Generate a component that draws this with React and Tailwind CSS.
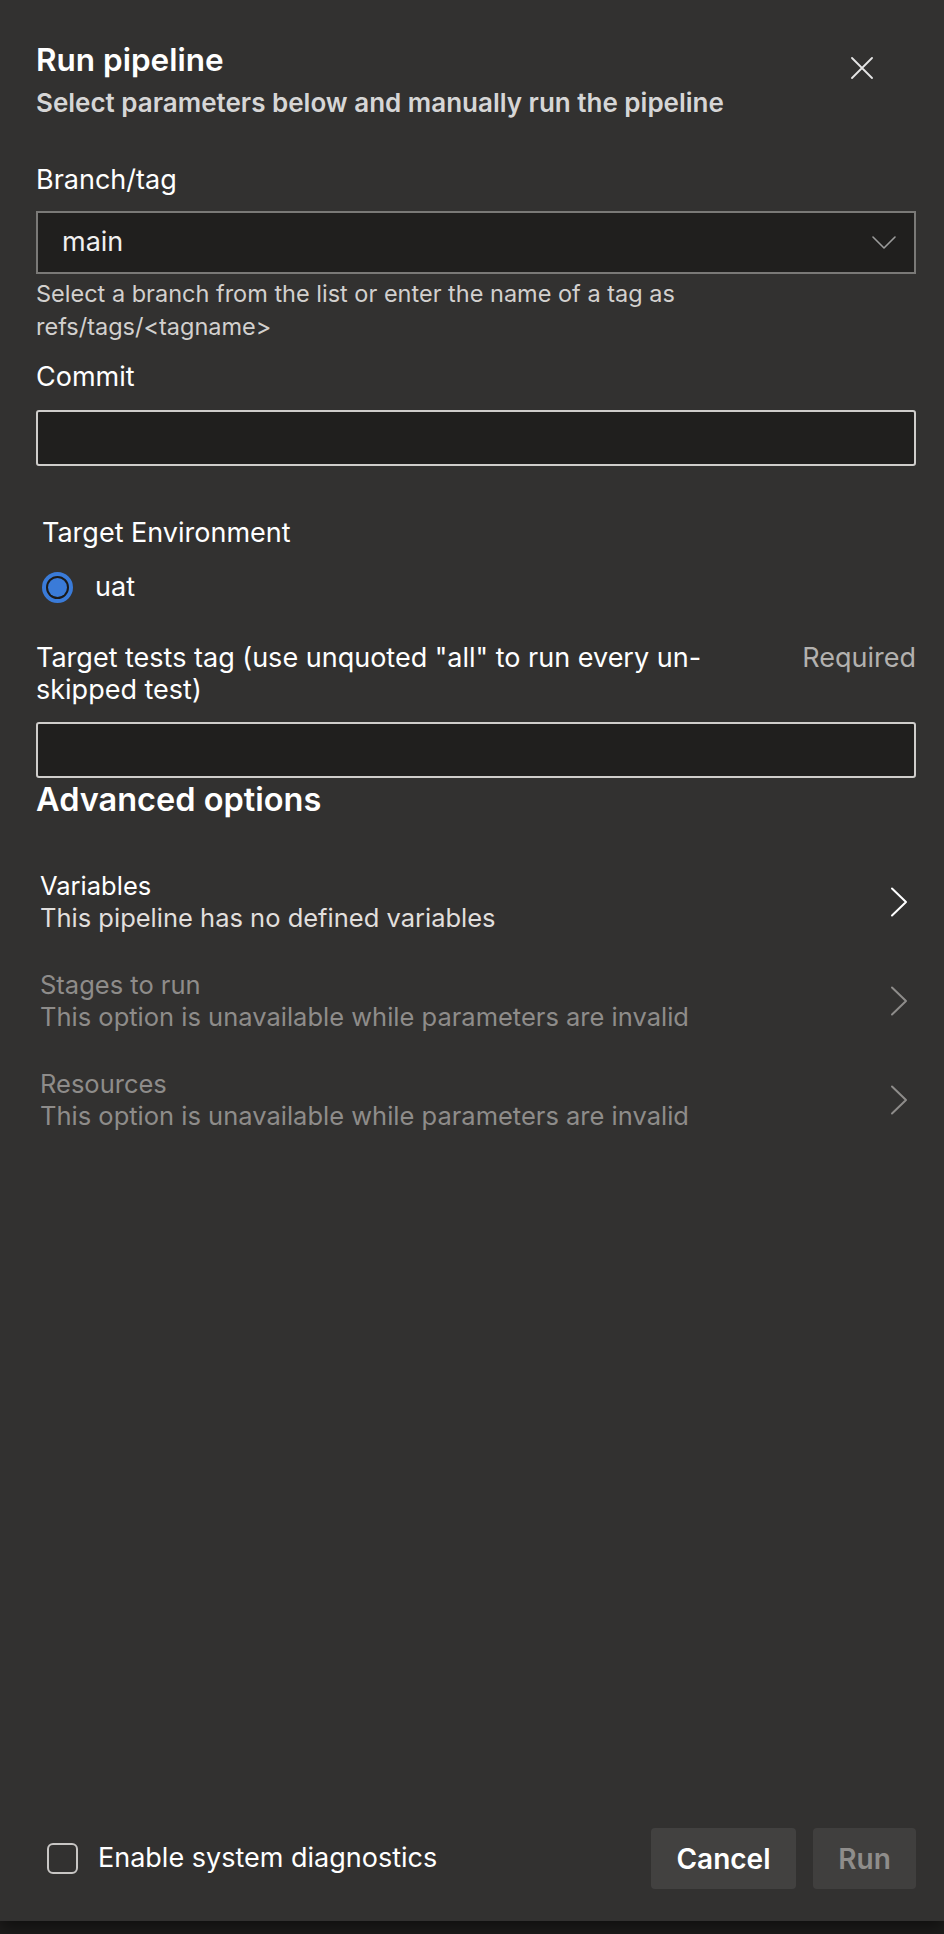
import React, { useState } from "react";

const font = { fontFamily: "Inter, 'Noto Sans', 'Liberation Sans', sans-serif" };

const CloseIcon = () => (
  <svg width="22" height="22" viewBox="0 0 22 22" fill="none">
    <path d="M1 1L21 21M21 1L1 21" stroke="#e6e6e6" strokeWidth="1.8" strokeLinecap="round" />
  </svg>
);

const ChevronDown = () => (
  <svg width="24" height="13" viewBox="0 0 24 13" fill="none">
    <path d="M1 1L12 12L23 1" stroke="#9b9b9b" strokeWidth="1.6" strokeLinecap="round" strokeLinejoin="round" />
  </svg>
);

const ChevronRight = ({ color }) => (
  <svg width="18" height="30" viewBox="0 0 18 30" fill="none">
    <path d="M2 1.5L16 15L2 28.5" stroke={color} strokeWidth="2" strokeLinecap="round" strokeLinejoin="round" />
  </svg>
);

const advancedRows = [
  { title: "Variables", desc: "This pipeline has no defined variables", disabled: false },
  { title: "Stages to run", desc: "This option is unavailable while parameters are invalid", disabled: true },
  { title: "Resources", desc: "This option is unavailable while parameters are invalid", disabled: true },
];

const App = () => {
  const [diagnostics, setDiagnostics] = useState(false);

  return (
    <div className="h-[1934px] overflow-hidden bg-[#1e1d1c]" style={font}>
      <div className="h-[1921px] flex flex-col bg-[#323130] shadow-[0_6px_16px_rgba(0,0,0,0.5)]">
        {/* Header */}
        <div className="flex justify-between pl-[36px] pr-[71px] pt-[41px]">
          <div>
            <h1 className="text-[31.5px] leading-[37px] font-semibold text-white">Run pipeline</h1>
            <p className="mt-[9px] text-[26px] leading-[32px] font-semibold text-[#d6d6d6]">
              Select parameters below and manually run the pipeline
            </p>
          </div>
          <button className="mt-[16px] h-[22px]">
            <CloseIcon />
          </button>
        </div>

        {/* Form */}
        <div className="pl-[36px] pr-[28px]">
          <label className="block mt-[45px] text-[27px] leading-[32px] text-white">Branch/tag</label>
          <div className="mt-[15px] h-[63px] flex items-center justify-between border-2 border-[#7a7977] bg-[#201f1e] pl-[24px] pr-[18px]">
            <span className="text-[27px] text-[#f0f0f0]">main</span>
            <ChevronDown />
          </div>
          <p className="mt-[3px] text-[23.5px] leading-[33px] text-[#d2d0ce]">
            Select a branch from the list or enter the name of a tag as
            <br />
            refs/tags/&lt;tagname&gt;
          </p>

          <label className="block mt-[18px] text-[27px] leading-[32px] text-white">Commit</label>
          <div className="mt-[17px] h-[56px] rounded-[3px] border-2 border-[#cfcdcb] bg-[#201f1e]" />

          <div className="pl-[6px]">
            <div className="mt-[51px] text-[27px] leading-[32px] text-white">Target Environment</div>
            <div className="mt-[22px] flex items-center gap-[22px]">
              <div className="w-[31px] h-[31px] rounded-full border-[4px] border-[#3a7bd8] bg-[#1b1a19] flex items-center justify-center">
                <div className="w-[19px] h-[19px] rounded-full bg-[#3a7bd8]" />
              </div>
              <span className="text-[27px] leading-[32px] text-white">uat</span>
            </div>
          </div>

          <div className="mt-[39px] flex justify-between items-start">
            <label className="text-[27px] leading-[32px] text-white">
              Target tests tag (use unquoted "all" to run every un-
              <br />
              skipped test)
            </label>
            <span className="text-[27px] leading-[32px] text-[#b3b1af]">Required</span>
          </div>
          <div className="mt-[16px] h-[56px] rounded-[3px] border-2 border-[#cfcdcb] bg-[#201f1e]" />

          <h2 className="mt-[3px] text-[32.5px] leading-[38px] font-semibold text-white">Advanced options</h2>

          <div className="mt-[51px] flex flex-col gap-[35px]">
            {advancedRows.map((row) => (
              <div key={row.title} className="flex items-center justify-between pl-[4px] pr-[8px]">
                <div className={`text-[25.5px] leading-[32px] ${row.disabled ? "text-[#8e8c8a]" : "text-white"}`}>
                  <div>{row.title}</div>
                  <div className={row.disabled ? "text-[#8e8c8a]" : "text-[#e1dfdd]"}>{row.desc}</div>
                </div>
                <ChevronRight color={row.disabled ? "#8e8c8a" : "#ffffff"} />
              </div>
            ))}
          </div>
        </div>

        {/* Footer */}
        <div className="mt-auto flex items-center justify-between pl-[47px] pr-[28px] pb-[32px]">
          <label className="flex items-center gap-[20px] cursor-pointer">
            <span
              onClick={() => setDiagnostics(!diagnostics)}
              className="w-[31px] h-[31px] rounded-[6px] border-2 border-[#c8c6c4]"
            />
            <span className="text-[27px] text-white">Enable system diagnostics</span>
          </label>
          <div className="flex gap-[17px]">
            <button className="h-[61px] w-[145px] rounded-[4px] bg-[#424140] text-[28px] font-semibold text-white">
              Cancel
            </button>
            <button disabled className="h-[61px] w-[103px] rounded-[4px] bg-[#403f3e] text-[28px] font-semibold text-[#8f8d8b]">
              Run
            </button>
          </div>
        </div>
      </div>
    </div>
  );
};

export default App;
